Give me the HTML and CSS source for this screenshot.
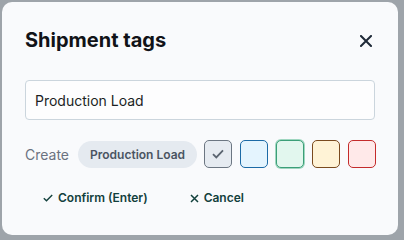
FILE: index.html
```html
<!DOCTYPE html>
<html lang="en">
<head>
    <meta charset="UTF-8">
    <title>Shipment tags</title>
    <link rel="stylesheet" href="styles.css">
</head>
<body>
    <div class="modal">
        <div class="modal-head">
            <h2>Shipment tags</h2>
            <button class="close" aria-label="Close">
                <svg width="12" height="12" viewBox="0 0 12 12"><path d="M1 1L11 11M11 1L1 11" stroke="#1f2937" stroke-width="2" stroke-linecap="square"/></svg>
            </button>
        </div>
        <input class="tag-input" type="text" value="Production Load">
        <div class="create-row">
            <span class="create-label">Create</span>
            <span class="pill">Production Load</span>
            <div class="swatches">
                <span class="swatch gray">
                    <svg width="12" height="10" viewBox="0 0 12 10"><path d="M1 5.2L4.3 8.4L11 1.4" fill="none" stroke="#5b6470" stroke-width="1.8"/></svg>
                </span>
                <span class="swatch blue"></span>
                <span class="swatch green"></span>
                <span class="swatch yellow"></span>
                <span class="swatch red"></span>
            </div>
        </div>
        <div class="actions">
            <button class="act">
                <svg width="10" height="8" viewBox="0 0 10 8"><path d="M0.8 4.2L3.5 6.8L9.2 1" fill="none" stroke="#12403c" stroke-width="1.4"/></svg>
                Confirm (Enter)
            </button>
            <button class="act">
                <svg width="9" height="9" viewBox="0 0 9 9"><path d="M1 1L8 8M8 1L1 8" stroke="#12403c" stroke-width="1.5"/></svg>
                Cancel
            </button>
        </div>
    </div>
</body>
</html>
```

FILE: styles.css
```css
*{
    margin: 0;
    padding: 0;
    box-sizing: border-box;
}
body{
    background: #9ea4aa;
    font-family: Inter, "Liberation Sans", sans-serif;
}
.modal{
    width: 396px;
    height: 233px;
    margin: 2px;
    background: #f9fafc;
    border-radius: 10px;
    padding: 26px 23px 0 23px;
}
.modal-head{
    display: flex;
    justify-content: space-between;
    align-items: center;
    height: 24px;
}
.modal-head h2{
    font-size: 20px;
    font-weight: 700;
    color: #111318;
    line-height: 24px;
}
.close{
    border: none;
    background: none;
    display: flex;
    margin-right: 3px;
    margin-top: 2px;
}
.tag-input{
    display: block;
    width: 100%;
    height: 40px;
    margin-top: 28px;
    border: 1px solid #cbd5dd;
    border-radius: 4px;
    background: #fdfdfe;
    padding: 0 9px;
    font-family: Inter, "Liberation Sans", sans-serif;
    font-size: 14px;
    color: #1b1f24;
    outline: none;
}
.create-row{
    display: flex;
    align-items: center;
    margin-top: 20px;
    height: 28px;
}
.create-label{
    font-size: 14px;
    color: #6b7280;
    margin-right: 9px;
}
.pill{
    flex-shrink: 0;
    white-space: nowrap;
    background: #e5eaf0;
    color: #4a5462;
    font-size: 12px;
    font-weight: 600;
    height: 27px;
    line-height: 27px;
    padding: 0 12px;
    border-radius: 14px;
    margin-right: 7px;
}
.swatches{
    display: flex;
    gap: 8px;
}
.swatch{
    flex-shrink: 0;
    width: 28px;
    height: 28px;
    border-radius: 5px;
    border: 1px solid;
    display: flex;
    align-items: center;
    justify-content: center;
}
.gray{ background: #e6ebf1; border-color: #6c7682; }
.blue{ background: #e4f4fe; border-color: #1c6aa6; }
.green{ background: #e2f7ee; border-color: #3b9f78; box-shadow: 0 0 0 1px #9fd6c0; }
.yellow{ background: #fff3d6; border-color: #7a4a1e; }
.red{ background: #ffe9e9; border-color: #c42b2b; }
.actions{
    display: flex;
    gap: 6px;
    margin-top: 14px;
}
.act{
    border: none;
    background: none;
    display: flex;
    align-items: center;
    gap: 5px;
    padding: 8px 18px;
    font-family: Inter, "Liberation Sans", sans-serif;
    font-size: 12px;
    font-weight: 600;
    color: #12403c;
    line-height: 16px;
}
```
